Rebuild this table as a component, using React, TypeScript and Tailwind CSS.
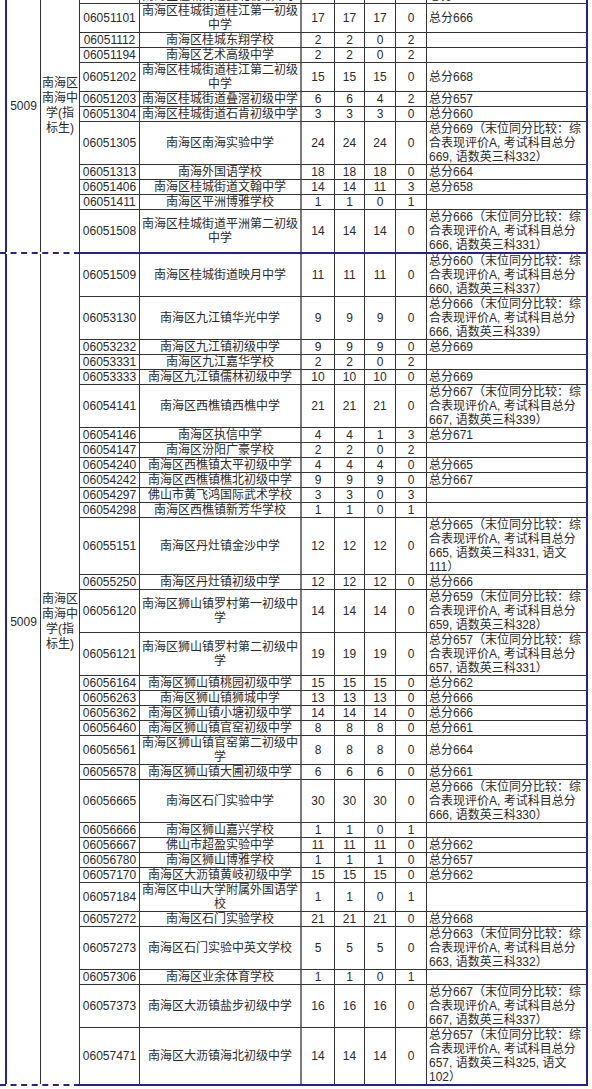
import React from 'react';

type Row = {
  code: string;
  name: string;
  nums: number[];
  remark: string[];
};

// 末位同分比较的备注，按原表折行
const tie = (total: number, three: number, chinese?: number): string[] => {
  const lines = [
    `总分${total}（末位同分比较：综`,
    '合表现评价A, 考试科目总分',
  ];
  if (chinese) {
    lines.push(`${total}, 语数英三科${three}, 语文`, `${chinese}）`);
  } else {
    lines.push(`${total}, 语数英三科${three}）`);
  }
  return lines;
};

const r = (code: string, name: string, a: number, b: number, c: number, d: number, remark: string[] = []): Row => ({
  code,
  name,
  nums: [a, b, c, d],
  remark,
});

// 截图上方被裁掉的两行
const HIDDEN_ROWS: Row[] = [
  r('06051006', '南海区桂城街道南海外国语初级中学', 19, 19, 19, 0, ['总分671']),
  r('06051040', '南海区桂城街道夏北初级中学', 12, 12, 12, 0, ['总分670']),
];

const PAGE_ONE: Row[] = [
  r('06051101', '南海区桂城街道桂江第一初级中学', 17, 17, 17, 0, ['总分666']),
  r('06051112', '南海区桂城东翔学校', 2, 2, 0, 2),
  r('06051194', '南海区艺术高级中学', 2, 2, 0, 2),
  r('06051202', '南海区桂城街道桂江第二初级中学', 15, 15, 15, 0, ['总分668']),
  r('06051203', '南海区桂城街道叠滘初级中学', 6, 6, 4, 2, ['总分657']),
  r('06051304', '南海区桂城街道石肯初级中学', 3, 3, 3, 0, ['总分660']),
  r('06051305', '南海区南海实验中学', 24, 24, 24, 0, tie(669, 332)),
  r('06051313', '南海外国语学校', 18, 18, 18, 0, ['总分664']),
  r('06051406', '南海区桂城街道文翰中学', 14, 14, 11, 3, ['总分658']),
  r('06051411', '南海区平洲博雅学校', 1, 1, 0, 1),
  r('06051508', '南海区桂城街道平洲第二初级中学', 14, 14, 14, 0, tie(666, 331)),
];

const PAGE_TWO: Row[] = [
  r('06051509', '南海区桂城街道映月中学', 11, 11, 11, 0, tie(660, 337)),
  r('06053130', '南海区九江镇华光中学', 9, 9, 9, 0, tie(666, 339)),
  r('06053232', '南海区九江镇初级中学', 9, 9, 9, 0, ['总分669']),
  r('06053331', '南海区九江嘉华学校', 2, 2, 0, 2),
  r('06053333', '南海区九江镇儒林初级中学', 10, 10, 10, 0, ['总分669']),
  r('06054141', '南海区西樵镇西樵中学', 21, 21, 21, 0, tie(667, 339)),
  r('06054146', '南海区执信中学', 4, 4, 1, 3, ['总分671']),
  r('06054147', '南海区汾阳广豪学校', 2, 2, 0, 2),
  r('06054240', '南海区西樵镇太平初级中学', 4, 4, 4, 0, ['总分665']),
  r('06054242', '南海区西樵镇樵北初级中学', 9, 9, 9, 0, ['总分667']),
  r('06054297', '佛山市黄飞鸿国际武术学校', 3, 3, 0, 3),
  r('06054298', '南海区西樵镇新芳华学校', 1, 1, 0, 1),
  r('06055151', '南海区丹灶镇金沙中学', 12, 12, 12, 0, tie(665, 331, 111)),
  r('06055250', '南海区丹灶镇初级中学', 12, 12, 12, 0, ['总分666']),
  r('06056120', '南海区狮山镇罗村第一初级中学', 14, 14, 14, 0, tie(659, 328)),
  r('06056121', '南海区狮山镇罗村第二初级中学', 19, 19, 19, 0, tie(657, 331)),
  r('06056164', '南海区狮山镇桃园初级中学', 15, 15, 15, 0, ['总分662']),
  r('06056263', '南海区狮山镇狮城中学', 13, 13, 13, 0, ['总分666']),
  r('06056362', '南海区狮山镇小塘初级中学', 14, 14, 14, 0, ['总分666']),
  r('06056460', '南海区狮山镇官窑初级中学', 8, 8, 8, 0, ['总分661']),
  r('06056561', '南海区狮山镇官窑第二初级中学', 8, 8, 8, 0, ['总分664']),
  r('06056578', '南海区狮山镇大圃初级中学', 6, 6, 6, 0, ['总分661']),
  r('06056665', '南海区石门实验中学', 30, 30, 30, 0, tie(666, 330)),
  r('06056666', '南海区狮山嘉兴学校', 1, 1, 0, 1),
  r('06056667', '佛山市超盈实验中学', 11, 11, 11, 0, ['总分662']),
  r('06056780', '南海区狮山博雅学校', 1, 1, 1, 0, ['总分657']),
  r('06057170', '南海区大沥镇黄岐初级中学', 15, 15, 15, 0, ['总分662']),
  r('06057184', '南海区中山大学附属外国语学校', 1, 1, 0, 1),
  r('06057272', '南海区石门实验学校', 21, 21, 21, 0, ['总分668']),
  r('06057273', '南海区石门实验中英文学校', 5, 5, 5, 0, tie(663, 332)),
  r('06057306', '南海区业余体育学校', 1, 1, 0, 1),
  r('06057373', '南海区大沥镇盐步初级中学', 16, 16, 16, 0, tie(667, 337)),
  r('06057471', '南海区大沥镇海北初级中学', 14, 14, 14, 0, tie(657, 325, 102)),
];

// 行高：每行文字 14px，加 1px 下框线
const HEIGHTS = ['h-[15px]', 'h-[29px]', 'h-[43px]', 'h-[57px]'];
const HEIGHTS_NO_BORDER = ['h-[14px]', 'h-[28px]', 'h-[42px]', 'h-[56px]'];
const NUM_WIDTHS = ['w-[33px]', 'w-[30px]', 'w-[31px]', 'w-[31px]'];

const splitName = (name: string): string[] => {
  const out: string[] = [];
  for (let i = 0; i < name.length; i += 13) out.push(name.slice(i, i + 13));
  return out;
};

const TableRow: React.FC<{ row: Row; last?: boolean }> = ({ row, last }) => {
  const nameLines = splitName(row.name);
  const lines = Math.max(nameLines.length, row.remark.length, 1);
  const height = last ? HEIGHTS_NO_BORDER[lines - 1] : HEIGHTS[lines - 1];

  return (
    <div className={`flex ${height} ${last ? '' : 'border-b border-[#333]'}`}>
      <div className="w-[60px] flex items-center justify-center border-r border-[#333]">{row.code}</div>
      <div className="w-[162px] flex flex-col items-center justify-center border-r-2 border-[#7a7a7a]">
        {nameLines.map((line, i) => (
          <span key={i} className="leading-[14px] whitespace-nowrap">{line}</span>
        ))}
      </div>
      {row.nums.map((n, i) => (
        <div key={i} className={`${NUM_WIDTHS[i]} flex items-center justify-center border-r border-[#333]`}>
          {n}
        </div>
      ))}
      <div className="flex-1 flex flex-col justify-center pl-[2px]">
        {row.remark.map((line, i) => (
          <span key={i} className="leading-[14px] whitespace-nowrap">{line}</span>
        ))}
      </div>
    </div>
  );
};

const GroupLabel: React.FC<{ className?: string }> = ({ className = '' }) => (
  <div className={`flex ${className}`}>
    <div className="w-[34px] flex items-center justify-center border-r border-[#333]">5009</div>
    <div className="w-[39px] flex flex-col items-center justify-center border-r border-[#333] leading-[15px]">
      <span>南海区</span>
      <span>南海中</span>
      <span>学(指</span>
      <span>标生)</span>
    </div>
  </div>
);

// 分页符：合并列上是虚线，其余是实线
const PageBreak: React.FC = () => (
  <div className="flex h-[2px]">
    <div className="w-[80px] border-t-2 border-dashed border-[#24248a]" />
    <div className="w-[508px] border-t-2 border-[#24248a]" />
  </div>
);

const App: React.FC = () => {
  return (
    <div className="w-[592px] h-[1089px] overflow-hidden bg-white text-[12px] text-[#2a2a2a] font-['Liberation_Sans','Noto_Sans_CJK_SC',sans-serif]">
      <div className="-mt-[40px]">
        <div className="flex ml-[5px] w-[583px] border-l-2 border-r-2 border-[#24248a]">
          <GroupLabel />
          <div className="flex-1 flex flex-col">
            {[...HIDDEN_ROWS, ...PAGE_ONE].map((row, i, all) => (
              <TableRow key={row.code} row={row} last={i === all.length - 1} />
            ))}
          </div>
        </div>

        <PageBreak />

        <div className="flex ml-[5px] w-[583px] border-l-2 border-r-2 border-[#24248a]">
          <div className="flex flex-col">
            <GroupLabel className="h-[736px]" />
            <div className="flex flex-1">
              <div className="w-[34px] border-r border-[#333]" />
              <div className="w-[39px] border-r border-[#333]" />
            </div>
          </div>
          <div className="flex-1 flex flex-col">
            {PAGE_TWO.map((row, i) => (
              <TableRow key={row.code} row={row} last={i === PAGE_TWO.length - 1} />
            ))}
          </div>
        </div>

        <PageBreak />
      </div>
    </div>
  );
};

export default App;
